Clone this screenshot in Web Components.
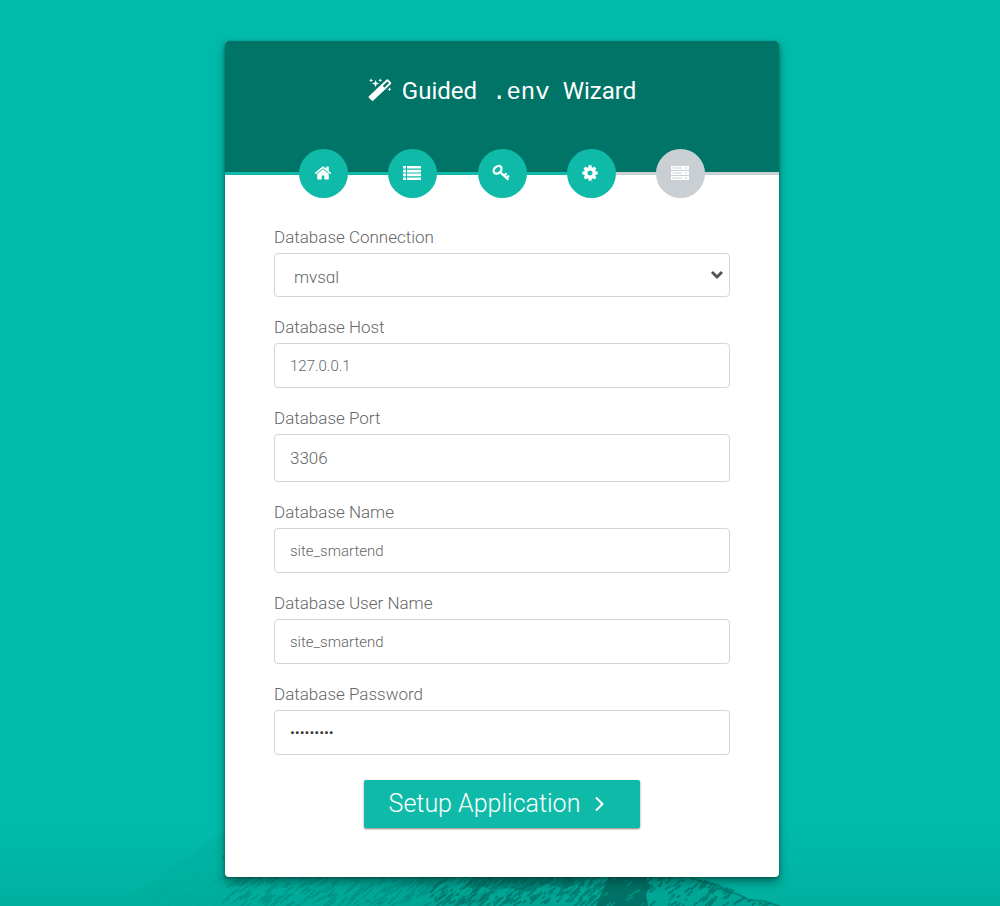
<!DOCTYPE html>
<html lang="en">
<head>
<meta charset="utf-8">
<meta name="viewport" content="width=device-width, initial-scale=1">
<title>Guided .env Wizard</title>
<style>
  html, body { margin: 0; min-height: 100%; }
  body {
    --teal: #0fbba8;
    --header: #007467;
    --muted: #c9cfd2;
    font-family: Roboto, "Liberation Sans", sans-serif;
    font-weight: 300;
    color: #666;
    background: #00bbaa;
  }
</style>
</head>
<body>
<wizard-page>
  <wizard-card>
    <wizard-icon slot="title" name="wand"></wizard-icon>
    <span slot="title">Guided</span>
    <code slot="title">.env</code>
    <span slot="title">Wizard</span>
    <wizard-step slot="steps" icon="home" label="Welcome"></wizard-step>
    <wizard-step slot="steps" icon="list" label="Requirements"></wizard-step>
    <wizard-step slot="steps" icon="key" label="Permissions"></wizard-step>
    <wizard-step slot="steps" icon="cog" label="Environment"></wizard-step>
    <wizard-step slot="steps" icon="server" label="Finish" pending></wizard-step>
    <setup-form></setup-form>
  </wizard-card>
</wizard-page>

<script>
const icons = {
  home: [1792, 1792, '<path d="M1472 992v480q0 26-19 45t-45 19h-384v-384h-256v384h-384q-26 0-45-19t-19-45v-480q0-1 .5-3t.5-3l575-474 575 474q1 2 1 6zm223-69l-62 74q-8 9-21 11h-3q-13 0-21-7l-692-577-692 577q-12 8-24 7-13-2-21-11l-62-74q-8-10-7-23.5t11-21.5l719-599q32-26 76-26t76 26l244 204v-195q0-14 9-23t23-9h192q14 0 23 9t9 23v408l219 182q10 8 11 21.5t-7 23.5z"/>'],
  cog: [1792, 1792, '<path d="M1152 896q0-106-75-181t-181-75-181 75-75 181 75 181 181 75 181-75 75-181zm512-109v222q0 12-8 23t-20 13l-185 28q-19 54-39 91 35 50 107 138 10 12 10 25t-9 23q-27 37-99 108t-94 71q-12 0-26-9l-138-108q-44 23-91 38-16 136-29 186-7 28-36 28h-222q-14 0-24.5-8.5t-11.5-21.5l-28-184q-49-16-90-37l-141 107q-10 9-25 9-14 0-25-11-126-114-165-168-7-10-7-23 0-12 8-23 15-21 51-66.5t54-70.5q-27-50-41-99l-183-27q-13-2-21-12.5t-8-23.5v-222q0-12 8-23t19-13l186-28q14-46 39-92-40-57-107-138-10-12-10-24 0-10 9-23 26-36 98.5-107.5t94.5-71.5q13 0 26 10l138 107q44-23 91-38 16-136 29-186 7-28 36-28h222q14 0 24.5 8.5t11.5 21.5l28 184q49 16 90 37l142-107q9-9 24-9 13 0 25 10 129 119 165 170 7 8 7 22 0 12-8 23-15 21-51 66.5t-54 70.5q26 50 41 98l183 28q13 2 21 12.5t8 23.5z"/>'],
  list: [18, 18, '<path d="M0 2h3v2.6H0zM4 2h14v2.6H4zM0 5.8h3v2.6H0zM4 5.8h14v2.6H4zM0 9.6h3v2.6H0zM4 9.6h14v2.6H4zM0 13.4h3V16H0zM4 13.4h14V16H4z"/>'],
  key: [18, 18, '<g fill="none" stroke="currentColor" stroke-width="2.200"><ellipse cx="5.6" cy="5.8" rx="4.4" ry="3.300" transform="rotate(-42 5.6 5.8)"/><path d="M8.4 8.4l8 7.400M12 12l2.500-2.700M14.400 14.200l2.500-2.600"/></g>'],
  server: [18, 18, '<path fill-rule="evenodd" d="M0 2h18v4H0zM1.5 3.5v1H11v-1zM14 3.5v1h2v-1zM0 7h18v4H0zM1.5 8.5v1H11v-1zM14 8.5v1h2v-1zM0 12h18v4H0zM1.5 13.5v1H11v-1zM14 13.5v1h2v-1z"/>'],
  wand: [24, 24, '<path fill-rule="evenodd" d="M18.6 1.6q.8-.8 1.6 0l2.7 2.7q.8.8 0 1.6L5.4 22.600q-.9.8-1.700 0L.9 19.800q-.7-.8 0-1.600zM19.400 3.400l-4.600 4.500 1.700 1.700 4.600-4.500z"/><path d="M7.600 1.900l1 2.700 2.700 1-2.700 1-1 2.700-1-2.700-2.700-1 2.700-1zM3.100.3l.6 1.400 1.400.6-1.400.6-.6 1.400-.6-1.400-1.400-.6 1.400-.6zM12.200.3l.6 1.400 1.400.6-1.400.6-.6 1.400-.6-1.400-1.400-.6 1.400-.6zM21.500 9.300l.6 1.400 1.400.6-1.400.6-.6 1.400-.6-1.400-1.400-.6 1.400-.6z"/>'],
  chevron: [12, 16, '<path d="M2 1.500l6.500 6.500-6.500 6.500" fill="none" stroke="currentColor" stroke-width="2"/>'],
  caret: [14, 10, '<path d="M2 2l5 5 5-5" fill="none" stroke="currentColor" stroke-width="3"/>']
};

class WizardIcon extends HTMLElement {
  connectedCallback() {
    if (this.shadowRoot) return;
    const [w, h, body] = icons[this.getAttribute('name')];
    this.attachShadow({ mode: 'open' }).innerHTML = `
      <style>
        :host { display: inline-flex; width: 24px; height: 24px; flex: none; }
        svg { width: 100%; height: 100%; fill: currentColor; }
      </style>
      <svg viewBox="0 0 ${w} ${h}" aria-hidden="true">${body}</svg>`;
  }
}

// Short diagonal strokes that give the mountain its rocky grain.
// A fixed seed keeps the scene the same on every load.
function rockStrokes(seed, count, from, to, length) {
  let state = seed, d = '';
  const next = () => (state = (state * 16807) % 2147483647) / 2147483647;
  for (let i = 0; i < count; i++) {
    const x = from + next() * (to - from), y = next() * 112, l = length * (.3 + next());
    d += `M${x.toFixed(1)} ${y.toFixed(1)}l${l.toFixed(1)} ${(-l * (.6 + next() * .4)).toFixed(1)}`;
  }
  return d;
}

class WizardPage extends HTMLElement {
  constructor() {
    super();
    this.attachShadow({ mode: 'open' }).innerHTML = `
      <style>
        :host {
          display: flex; justify-content: center; align-items: flex-start;
          position: relative; overflow: hidden; box-sizing: border-box;
          min-height: 100vh; padding: 41px 16px 29px 20px;
          background: linear-gradient(#00bbaa calc(100% - 80px), #00b09f);
        }
        .scene { position: absolute; inset: auto 0 0 0; width: 100%; height: 110px; }
        slot { display: contents; }
      </style>
      <svg class="scene" viewBox="0 0 1000 110" preserveAspectRatio="xMidYMax slice" aria-hidden="true">
        <defs>
          <clipPath id="ridge"><path d="M105 110L150 86 185 62 212 42 330 0H640L690 82 705 84 720 89 735 94 748 103 765 105 782 110z"/></clipPath>
          <linearGradient id="slope">
            <stop offset="0" stop-color="#008f80" stop-opacity="0"/>
            <stop offset=".2" stop-color="#008f80" stop-opacity=".12"/>
            <stop offset=".5" stop-color="#008f80" stop-opacity=".4"/>
            <stop offset="1" stop-color="#008f80" stop-opacity=".3"/>
          </linearGradient>
        </defs>
        <g clip-path="url(#ridge)">
          <rect x="100" width="690" height="110" fill="url(#slope)"/>
          <g fill="none">
            <path d="${rockStrokes(11, 110, 110, 250, 14)}" stroke="#008577" stroke-opacity=".13"/>
            <path d="${rockStrokes(23, 850, 222, 480, 9)}" stroke="#007165" stroke-opacity=".36" stroke-width="1.500"/>
            <path d="${rockStrokes(37, 700, 430, 600, 7)}" stroke="#006258" stroke-opacity=".55" stroke-width="2"/>
            <path d="${rockStrokes(53, 500, 640, 770, 6)}" stroke="#00584f" stroke-opacity=".5" stroke-width="2"/>
          </g>
          <path d="M596 110l6-14 8-18h34l6 12-4 8 2 12z" fill="#006b60" opacity=".9"/>
          <path d="M468 84l18-8h110l-14 12-20 4-14-4-20 8-16-4-22 2z" fill="#006b60" opacity=".55"/>
          <path d="${rockStrokes(71, 330, 380, 700, 6)}" fill="none" stroke="#00b3a0" stroke-opacity=".5" stroke-width="1.500"/>
        </g>
        <path d="M688 80l14 6 16 3 10 7 12 3 8 5 16 1 18 6" fill="none" stroke="#007165" stroke-opacity=".7" stroke-width="1.500"/>
      </svg>
      <slot></slot>`;
  }
}

class WizardCard extends HTMLElement {
  constructor() {
    super();
    this.attachShadow({ mode: 'open' }).innerHTML = `
      <style>
        :host {
          display: block; position: relative; width: 100%; max-width: 554px;
          background: #fff; border-radius: 4px; overflow: hidden;
          box-shadow: 0 5px 10px rgba(0, 40, 35, .5), 0 1px 3px rgba(0, 40, 35, .4);
        }
        h1 {
          display: flex; align-items: baseline; justify-content: center;
          margin: 0; padding: 34px 0 40px;
          background: var(--header); color: #fff;
          font-size: 24px; line-height: 32px; font-weight: 400;
        }
        ::slotted(wizard-icon) { align-self: flex-start; margin-top: 3px; }
        ::slotted(span) { margin-left: 10px; }
        ::slotted(code) {
          margin-left: 15px; margin-right: 3px;
          font-family: "Courier New", "Liberation Mono", monospace;
          font-size: 24px; font-weight: 300;
        }
        nav {
          display: flex; justify-content: space-between; padding: 0 74px;
          background:
            linear-gradient(var(--teal), var(--teal)) 0 23px / 66% 3px no-repeat,
            linear-gradient(var(--muted), var(--muted)) 0 23px / 100% 3px no-repeat,
            linear-gradient(var(--header), var(--header)) 0 0 / 100% 23px no-repeat;
        }
        main { padding: 29px 49px 49px; }
      </style>
      <h1><slot name="title"></slot></h1>
      <nav aria-label="Setup steps"><slot name="steps"></slot></nav>
      <main><slot></slot></main>`;
  }
}

class WizardStep extends HTMLElement {
  connectedCallback() {
    if (this.shadowRoot) return;
    this.attachShadow({ mode: 'open' }).innerHTML = `
      <style>
        :host { display: block; }
        a {
          display: grid; place-items: center; box-sizing: border-box;
          width: 49px; height: 49px; padding: 0 2px 2px 0;
          border-radius: 50%; background: var(--teal); color: #fff;
        }
        :host([pending]) a { background: var(--muted); }
        wizard-icon { width: 18px; height: 18px; }
      </style>
      <a href="#${this.getAttribute('icon')}" aria-label="${this.getAttribute('label')}">
        <wizard-icon name="${this.getAttribute('icon')}"></wizard-icon>
      </a>`;
  }
}

const fieldBase = `
  :host { display: grid; gap: 6px; }
  label { font-size: 17px; line-height: 20px; }
  input, select {
    box-sizing: border-box; width: 100%; height: 45px; margin: 0;
    border: 1px solid #d4d4d4; border-radius: 4px; outline: 0;
    background: #fff; color: inherit; font: inherit;
  }`;

class FormField extends HTMLElement {
  connectedCallback() {
    if (this.shadowRoot) return;
    this.attachShadow({ mode: 'open' }).innerHTML = `
      <style>
        ${fieldBase}
        input { padding: 0 15px; font-size: 15px; }
        input[type=number] { height: 48px; font-size: 17px; appearance: textfield; }
        input[type=number]::-webkit-inner-spin-button { appearance: none; margin: 0; }
        input[type=password] { color: #333; }
      </style>
      <label for="field">${this.getAttribute('label')}</label>
      <input id="field" type="${this.getAttribute('type') || 'text'}" value="${this.getAttribute('value')}">`;
  }
}

class FormSelect extends HTMLElement {
  connectedCallback() {
    if (this.shadowRoot) return;
    this.attachShadow({ mode: 'open' }).innerHTML = `
      <style>
        ${fieldBase}
        .box { display: grid; align-items: center; }
        .box > * { grid-area: 1 / 1; }
        select { appearance: none; height: 44px; padding: 13px 30px 13px 19px; font-size: 17px; }
        wizard-icon { justify-self: end; width: 14px; height: 10px; margin-right: 6px; color: #555; pointer-events: none; }
      </style>
      <label for="field">${this.getAttribute('label')}</label>
      <div class="box">
        <select id="field"><option>mysql</option></select>
        <wizard-icon name="caret"></wizard-icon>
      </div>`;
  }
}

class SetupForm extends HTMLElement {
  constructor() {
    super();
    this.attachShadow({ mode: 'open' }).innerHTML = `
      <style>
        :host { display: block; }
        form { display: grid; gap: 20px; }
        button {
          display: flex; align-items: center; gap: 14px; justify-self: center;
          height: 48px; margin: 5px 0 0; padding: 0 34px 0 25px;
          border: 0; border-radius: 2px; background: var(--teal); color: #fff;
          font: inherit; font-size: 25px; line-height: 32px;
          box-shadow: 0 1px 2px rgba(0, 0, 0, .5);
        }
        wizard-icon { width: 12px; height: 16px; }
      </style>
      <form>
        <form-select label="Database Connection"></form-select>
        <form-field label="Database Host" value="127.0.0.1"></form-field>
        <form-field label="Database Port" type="number" value="3306"></form-field>
        <form-field label="Database Name" value="site_smartend"></form-field>
        <form-field label="Database User Name" value="site_smartend"></form-field>
        <form-field label="Database Password" type="password" value="password1"></form-field>
        <button type="button">Setup Application <wizard-icon name="chevron"></wizard-icon></button>
      </form>`;
  }
}

customElements.define('wizard-icon', WizardIcon);
customElements.define('wizard-page', WizardPage);
customElements.define('wizard-card', WizardCard);
customElements.define('wizard-step', WizardStep);
customElements.define('form-field', FormField);
customElements.define('form-select', FormSelect);
customElements.define('setup-form', SetupForm);
</script>
</body>
</html>
